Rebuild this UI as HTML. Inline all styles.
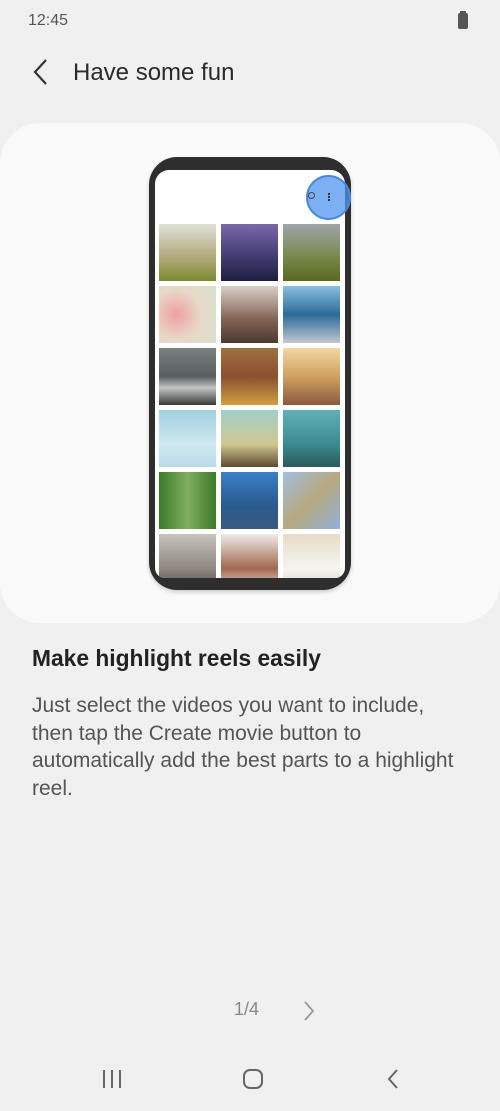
<!DOCTYPE html>
<html><head><meta charset="utf-8"><style>
*{margin:0;padding:0;box-sizing:border-box}
body{width:500px;height:1111px;background:#f0f0f0;font-family:"Liberation Sans",sans-serif;position:relative;overflow:hidden}
.abs{position:absolute}
.t{position:absolute;width:57px;height:57px}
</style></head><body>
<div class="abs" style="left:28px;top:12px;font-size:16px;color:#555">12:45</div>
<div class="abs" style="left:458px;top:13px;width:10px;height:16px;background:#555;border-radius:2px"></div>
<div class="abs" style="left:460px;top:11px;width:6px;height:3px;background:#555"></div>
<svg class="abs" style="left:30px;top:58px" width="20" height="28"><path d="M16 2 L5 14 L16 26" stroke="#333" stroke-width="2.2" fill="none"/></svg>
<div class="abs" style="left:73px;top:59px;font-size:24px;color:#2a2a2a">Have some fun</div>

<div class="abs" style="left:0;top:123px;width:500px;height:500px;background:#fafafa;border-radius:40px"></div>
<div class="abs" style="left:149px;top:157px;width:202px;height:433px;background:#2e2e2e;border-radius:28px;box-shadow:0 2px 4px rgba(0,0,0,.2)"></div>
<div class="abs" style="left:155px;top:170px;width:190px;height:408px;background:#fff;border-radius:14px 14px 10px 10px;overflow:hidden">
<div class="t" style="left:4px;top:54px;background:linear-gradient(#e0e0d8,#b0a878 60%,#7a8a30)"></div>
<div class="t" style="left:66px;top:54px;background:linear-gradient(#7a68a8,#403a70 60%,#1e2040)"></div>
<div class="t" style="left:128px;top:54px;background:linear-gradient(#a0a6a8,#7a8a50 55%,#5a6a20)"></div>
<div class="t" style="left:4px;top:116px;background:radial-gradient(circle at 30% 50%,#f0a0a0,#e8d8c8 50%,#d8e0d0)"></div>
<div class="t" style="left:66px;top:116px;background:linear-gradient(#d8d0c8,#806050 60%,#4a3a30)"></div>
<div class="t" style="left:128px;top:116px;background:linear-gradient(#8ac0e0,#2a6a98 50%,#c0c8d0)"></div>
<div class="t" style="left:4px;top:178px;background:linear-gradient(#7a8080,#5a6060 50%,#c0c4c4 70%,#3a3a3a)"></div>
<div class="t" style="left:66px;top:178px;background:linear-gradient(#a07040,#8a5030 50%,#d0a040)"></div>
<div class="t" style="left:128px;top:178px;background:linear-gradient(#f0d8a0,#d0a060 50%,#8a5a40)"></div>
<div class="t" style="left:4px;top:240px;background:linear-gradient(#a0d0e0,#d0e8f0 60%,#b8d8e8)"></div>
<div class="t" style="left:66px;top:240px;background:linear-gradient(#a0d0c8,#d0c890 60%,#604a30)"></div>
<div class="t" style="left:128px;top:240px;background:linear-gradient(#60b0b8,#3a8a90 60%,#2a5a58)"></div>
<div class="t" style="left:4px;top:302px;background:linear-gradient(90deg,#3a7a28,#80b060 50%,#3a7a28)"></div>
<div class="t" style="left:66px;top:302px;background:linear-gradient(#3a80c8,#2a5a90 60%,#3a5a80)"></div>
<div class="t" style="left:128px;top:302px;background:linear-gradient(135deg,#a0c0e0,#b8a880 50%,#90b0d8)"></div>
<div class="t" style="left:4px;top:364px;background:linear-gradient(#c8c4c0,#908880 60%,#505048)"></div>
<div class="t" style="left:66px;top:364px;background:linear-gradient(#f0ece8,#a06850 60%,#e8e0d8)"></div>
<div class="t" style="left:128px;top:364px;background:linear-gradient(#e8dcc8,#f4f4f0 60%,#d8d4c8)"></div>
</div>
<div class="abs" style="left:306px;top:175px;width:45px;height:45px;border-radius:50%;background:rgba(80,150,240,.75);border:2px solid #4a88e0"></div>
<div class="abs" style="left:328px;top:193px;width:2px;height:2px;background:#333;box-shadow:0 3px #333,0 6px #333"></div>
<div class="abs" style="left:308px;top:192px;width:7px;height:7px;border:1.5px solid #444;border-radius:50%"></div>

<div class="abs" style="left:32px;top:645px;font-size:22.8px;font-weight:bold;color:#222;white-space:nowrap">Make highlight reels easily</div>
<div class="abs" style="left:32px;top:692px;width:460px;font-size:21px;line-height:27.5px;color:#555;white-space:nowrap">Just select the videos you want to include,<br>then tap the Create movie button to<br>automatically add the best parts to a highlight<br>reel.</div>

<div class="abs" style="left:234px;top:999px;font-size:18px;color:#888">1/4</div>
<svg class="abs" style="left:302px;top:1000px" width="14" height="22"><path d="M3 2 L11 11 L3 20" stroke="#999" stroke-width="1.8" fill="none"/></svg>
<svg class="abs" style="left:100px;top:1068px" width="26" height="22"><path d="M4 2V20M12 2V20M20 2V20" stroke="#666" stroke-width="2"/></svg>
<div class="abs" style="left:243px;top:1069px;width:20px;height:20px;border:2px solid #666;border-radius:7px"></div>
<svg class="abs" style="left:385px;top:1068px" width="16" height="22"><path d="M12 2 L4 11 L12 20" stroke="#666" stroke-width="2" fill="none"/></svg>
</body></html>
